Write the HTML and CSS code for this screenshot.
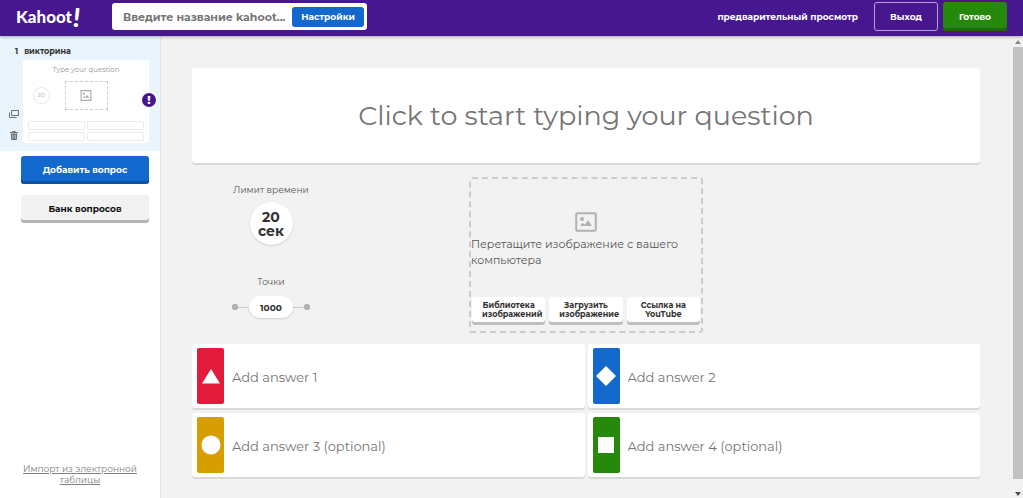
FILE: index.html
```html
<!DOCTYPE html>
<html lang="ru">
<head>
    <meta charset="UTF-8">
    <meta name="viewport" content="width=device-width, initial-scale=1.0">
    <title>Kahoot!</title>
    <link rel="stylesheet" href="styles.css">
</head>
<body>
    <header class="topbar">
        <a href="#" class="logo">Kahoot<span>!</span></a>
        <div class="title-box">
            <input type="text" aria-label="Название kahoot" placeholder="Введите название kahoot...">
            <button class="settings-btn">Настройки</button>
        </div>
        <nav class="actions">
            <a href="#" class="preview">предварительный просмотр</a>
            <button class="exit-btn">Выход</button>
            <button class="done-btn">Готово</button>
        </nav>
    </header>

    <div class="layout">
        <aside class="sidebar">
            <div class="slide">
                <div class="slide-title"><span>1</span>викторина</div>
                <div class="slide-body">
                    <div class="slide-tools">
                        <button aria-label="Дублировать">
                            <svg width="10" height="8" viewBox="0 0 10 8" fill="none" stroke="#6e6e6e"><path d="M2.5 .5h7v5h-7zM.5 2.5v5h7"/></svg>
                        </button>
                        <button aria-label="Удалить">
                            <svg width="8" height="9" viewBox="0 0 8 9"><path fill="#6e6e6e" fill-rule="evenodd" d="M0 1h2.5V0h3v1H8v1H0zM.8 2.5h6.4L6.8 9H1.2zM2.5 3.8v4h.7v-4zm2.3 0v4h.7v-4z"/></svg>
                        </button>
                    </div>
                    <div class="thumb">
                        <div class="thumb-question">Type your question</div>
                        <div class="thumb-middle">
                            <span class="thumb-time">20</span>
                            <span class="thumb-media">
                                <svg width="12" height="11" viewBox="0 0 22 20"><path fill="#aaa" fill-rule="evenodd" d="M1 0h20v20H1zM3 2v16h16V2z"/><circle cx="7" cy="7" r="2" fill="#aaa"/><path fill="#aaa" d="M5 14l3-3 2 2 3-4 4 5z"/></svg>
                            </span>
                        </div>
                        <div class="thumb-answers"><i></i><i></i><i></i><i></i></div>
                        <span class="alert">!</span>
                    </div>
                </div>
            </div>
            <button class="side-btn add-btn">Добавить вопрос</button>
            <button class="side-btn bank-btn">Банк вопросов</button>
            <a href="#" class="import">Импорт из электронной таблицы</a>
        </aside>

        <main class="editor">
            <input type="text" class="question" aria-label="Вопрос" placeholder="Click to start typing your question">

            <div class="middle">
                <div class="options">
                    <div class="label">Лимит времени</div>
                    <button class="time">20<br>сек</button>
                    <div class="label">Точки</div>
                    <div class="points"><button>1000</button></div>
                </div>
                <div class="media">
                    <svg width="22" height="20" viewBox="0 0 22 20"><rect x="1.2" y="1.2" width="19.6" height="17.6" rx="1" fill="none" stroke="#b2b2b2" stroke-width="2"/><circle cx="7" cy="7" r="2" fill="#b2b2b2"/><path fill="#b2b2b2" d="M5 14l2.500-3 2.500 1.500 3-4.500 4 6z"/></svg>
                    <p>Перетащите изображение с вашего компьютера</p>
                    <div class="media-buttons">
                        <button>Библиотека изображений</button>
                        <button>Загрузить изображение</button>
                        <button>Ссылка на YouTube</button>
                    </div>
                </div>
            </div>

            <div class="answers">
                <label class="answer">
                    <span class="shape red"><svg width="18" height="20" viewBox="0 0 18 20"><path d="M9 3l9 14.500H0z"/></svg></span>
                    <input type="text" placeholder="Add answer 1">
                </label>
                <label class="answer">
                    <span class="shape blue"><svg width="20" height="20" viewBox="0 0 20 20"><path d="M10 0l10 10-10 10L0 10z"/></svg></span>
                    <input type="text" placeholder="Add answer 2">
                </label>
                <label class="answer">
                    <span class="shape yellow"><svg width="20" height="20" viewBox="0 0 20 20"><circle cx="10" cy="10" r="9.500"/></svg></span>
                    <input type="text" placeholder="Add answer 3 (optional)">
                </label>
                <label class="answer">
                    <span class="shape green"><svg width="16" height="16" viewBox="0 0 16 16"><path d="M0 0h16v16H0z"/></svg></span>
                    <input type="text" placeholder="Add answer 4 (optional)">
                </label>
            </div>
        </main>

        <div class="scrollbar">
            <svg width="6" height="4" viewBox="0 0 6 4"><path d="M3 0l3 4H0z"/></svg>
            <div class="scroll-thumb"></div>
            <svg width="6" height="4" viewBox="0 0 6 4"><path fill="#505050" d="M0 0h6L3 4z"/></svg>
        </div>
    </div>
</body>
</html>
```
FILE: styles.css
```css
* {
    box-sizing: border-box;
}
body {
    margin: 0;
    min-height: 100vh;
    display: flex;
    flex-direction: column;
    font-family: Montserrat, Inter, sans-serif;
    font-size: 9px;
    color: #333;
    background-color: #f2f2f2;
}
button, input {
    font-family: inherit;
    border: none;
    padding: 0;
    margin: 0;
}
button {
    cursor: pointer;
    font-size: 9px;
    font-weight: 700;
    color: #333;
    border-radius: 3px;
}
input {
    min-width: 0;
    background: none;
    outline: none;
}
input::placeholder {
    color: #757575;
    opacity: 1;
}
svg {
    display: block;
    flex: none;
}

/* header */
.topbar {
    display: flex;
    align-items: center;
    height: 36px;
    padding: 0 16px 3px;
    background-color: #46178f;
    box-shadow: 0 1px 3px rgba(0, 0, 0, 0.3);
    z-index: 1;
}
.logo {
    display: flex;
    align-items: center;
    width: 96px;
    font-family: Lato, sans-serif;
    font-size: 17px;
    font-weight: 900;
    line-height: 28px;
    color: #fff;
    text-decoration: none;
}
.logo span {
    margin-left: 1px;
    font-size: 26px;
    transform: rotate(6deg);
}
.title-box {
    display: flex;
    align-items: center;
    width: 255px;
    height: 27px;
    padding: 0 3px 0 11px;
    background-color: #fff;
    border-radius: 3px;
}
.title-box input {
    flex: 1;
    font-size: 11px;
    font-weight: 700;
}
.settings-btn {
    width: 72px;
    height: 20px;
    color: #fff;
    background-color: #1368ce;
}
.actions {
    display: flex;
    align-items: center;
    margin-left: auto;
}
.preview {
    margin-right: 16px;
    font-weight: 700;
    color: #fff;
    text-decoration: none;
}
.exit-btn, .done-btn {
    width: 64px;
    height: 29px;
    color: #fff;
}
.exit-btn {
    margin-right: 5px;
    background: none;
    border: 1px solid #b5a2d2;
}
.done-btn {
    padding-bottom: 1px;
    background-color: #26890c;
    box-shadow: inset 0 -3px #1c6a08;
}

/* sidebar */
.layout {
    flex: 1;
    display: flex;
}
.sidebar {
    display: flex;
    flex-direction: column;
    width: 161px;
    padding-bottom: 13px;
    background-color: #fff;
    border-right: 1px solid #e6e6e6;
}
.slide {
    height: 115px;
    padding: 9px 11px 0 8px;
    background-color: #eaf4fc;
    margin-bottom: 5px;
}
.slide-title {
    padding-left: 7px;
    font-size: 8px;
    font-weight: 700;
    line-height: 12px;
}
.slide-title span {
    margin-right: 6px;
}
.slide-body {
    display: flex;
    margin-top: 3px;
}
.slide-tools {
    display: flex;
    flex-direction: column;
    justify-content: flex-end;
    align-items: center;
    gap: 13px;
    width: 11px;
    margin-right: 4px;
    padding-bottom: 3px;
}
.slide-tools button {
    background: none;
}
.thumb {
    position: relative;
    flex: 1;
    height: 83px;
    padding: 4px 5px 0;
    background-color: #fff;
    border-radius: 3px;
}
.thumb-question {
    font-size: 7px;
    line-height: 11px;
    text-align: center;
    color: #999;
}
.thumb-middle {
    display: grid;
    grid-template-columns: 1fr 43px 1fr;
    align-items: center;
    margin: 6px 0 11px;
}
.thumb-time {
    justify-self: center;
    width: 17px;
    height: 17px;
    margin-right: 10px;
    font-size: 6px;
    line-height: 15px;
    text-align: center;
    color: #999;
    border: 1px solid #e5e5e5;
    border-radius: 50%;
}
.thumb-media {
    display: flex;
    align-items: center;
    justify-content: center;
    height: 29px;
    border: 1px dashed #ccc;
}
.thumb-answers {
    display: grid;
    grid-template-columns: 1fr 1fr;
    gap: 2px;
}
.thumb-answers i {
    height: 9px;
    border: 1px solid #ebebeb;
    border-radius: 2px;
}
.alert {
    position: absolute;
    right: -7px;
    top: 33px;
    width: 14px;
    height: 14px;
    font-size: 11px;
    font-weight: 800;
    line-height: 14px;
    text-align: center;
    color: #fff;
    background-color: #46178f;
    border-radius: 50%;
    box-shadow: 0 0 0 1px #fff;
}
.side-btn {
    height: 28px;
    margin: 0 11px 11px 21px;
    padding-bottom: 2px;
}
.add-btn {
    color: #fff;
    background-color: #1368ce;
    box-shadow: inset 0 -3px #0e52a3;
}
.bank-btn {
    color: #111;
    background-color: #f2f2f2;
    box-shadow: inset 0 -3px #b5b5b5;
}
.import {
    margin: auto 16px 0;
    line-height: 11px;
    text-align: center;
    color: #808080;
}

/* editor */
.editor {
    flex: 1;
    min-width: 0;
    padding: 32px 33px 18px 31px;
}
.question {
    display: block;
    width: 100%;
    height: 97px;
    padding-bottom: 2px;
    font-size: 27px;
    text-align: center;
    background-color: #fff;
    border-radius: 3px;
    box-shadow: inset 0 -2px #d9d9d9;
}
.middle {
    display: grid;
    grid-template-columns: 1fr 234px 1fr;
    margin: 12px 0 11px;
}
.options {
    display: flex;
    flex-direction: column;
    align-items: center;
    width: 158px;
    padding-top: 6px;
}
.label {
    line-height: 14px;
    color: #555;
}
.time {
    width: 43px;
    height: 43px;
    margin: 5px 0 30px;
    font-size: 14px;
    line-height: 14px;
    background-color: #fff;
    border-radius: 50%;
    box-shadow: 0 1px 2px rgba(0, 0, 0, 0.15);
}
.points {
    display: flex;
    align-items: center;
    margin-top: 7px;
}
.points::before, .points::after {
    content: "";
    width: 17px;
    height: 6px;
    background: radial-gradient(circle at 3px 3px, #b2b2b2 3px, transparent 3px), linear-gradient(#ccc, #ccc) 0 50% / 100% 1px no-repeat;
}
.points::after {
    background: radial-gradient(circle at 14px 3px, #b2b2b2 3px, transparent 3px), linear-gradient(#ccc, #ccc) 0 50% / 100% 1px no-repeat;
}
.points button {
    width: 44px;
    height: 22px;
    background-color: #fff;
    border-radius: 11px;
    box-shadow: 0 1px 2px rgba(0, 0, 0, 0.15);
}
.media {
    display: flex;
    flex-direction: column;
    align-items: center;
    height: 156px;
    padding-top: 33px;
    border: 2px dashed #ccc;
    border-radius: 3px;
}
.media p {
    width: 100%;
    margin: 4px 0 0;
    font-size: 11px;
    line-height: 16px;
    color: #555;
}
.media-buttons {
    display: grid;
    grid-template-columns: repeat(3, minmax(0, 1fr));
    gap: 4px;
    width: 228px;
    margin: auto 0 6px;
}
.media-buttons button {
    height: 28px;
    padding: 0 10px 2px;
    font-size: 8px;
    line-height: 9px;
    background-color: #fff;
    box-shadow: inset 0 -3px #bfbfbf;
}
.answers {
    display: grid;
    grid-template-columns: 1fr 1fr;
    gap: 3px;
}
.answer {
    display: flex;
    align-items: center;
    height: 66px;
    padding: 4px 5px 6px;
    background-color: #fff;
    border-radius: 3px;
    box-shadow: inset 0 -2px #d9d9d9;
}
.answer input {
    flex: 1;
    margin-left: 8px;
    padding-top: 2px;
    font-size: 13px;
}
.shape {
    display: flex;
    align-items: center;
    justify-content: center;
    width: 27px;
    height: 56px;
    border-radius: 2px;
    fill: #fff;
}
.red { background-color: #e21b3c; }
.blue { background-color: #1368ce; }
.yellow { background-color: #d89e00; }
.green { background-color: #26890c; }

.scrollbar {
    display: flex;
    flex-direction: column;
    align-items: center;
    gap: 3px;
    width: 10px;
    padding: 4px 0 2px;
    fill: #8a8a8a;
}
.scroll-thumb {
    flex: 1;
    width: 10px;
    margin-bottom: 10px;
    background-color: #c1c1c1;
}
```
